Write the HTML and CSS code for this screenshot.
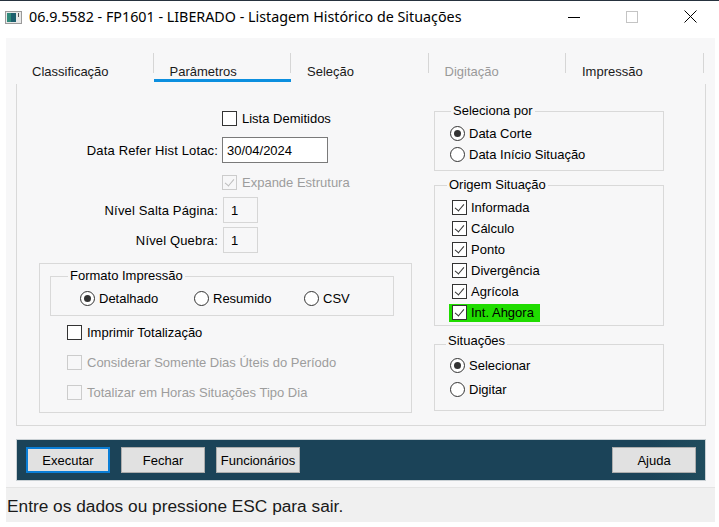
FILE: index.html
```html
<!DOCTYPE html>
<html lang="pt-BR">
<head>
    <meta charset="UTF-8">
    <title>Listagem Histórico de Situações</title>
    <link rel="stylesheet" href="styles.css">
</head>
<body>
    <div class="titlebar">
        <svg class="app-icon" width="17" height="13" viewBox="0 0 17 13">
            <rect x="0.5" y="0.5" width="16" height="12" fill="#e8e8e8" stroke="#9a9a9a"/>
            <rect x="2" y="2" width="9" height="9" fill="#1d5f6e"/>
            <rect x="2" y="2" width="4" height="9" fill="#2f8a7a"/>
            <rect x="13" y="2" width="1" height="4" fill="#555"/>
        </svg>
        <span class="title">06.9.5582 - FP1601 - LIBERADO - Listagem Histórico de Situações</span>
        <div class="win-btns">
            <span class="win-btn">
                <svg width="12" height="12" viewBox="0 0 12 12"><path d="M0 6.5h12" stroke="#000" stroke-width="1"/></svg>
            </span>
            <span class="win-btn">
                <svg width="12" height="12" viewBox="0 0 12 12"><rect x="0.5" y="0.5" width="11" height="11" fill="none" stroke="#c4c4c4"/></svg>
            </span>
            <span class="win-btn">
                <svg width="13" height="13" viewBox="0 0 13 13"><path d="M0.5 0.5l12 12M12.5 0.5l-12 12" stroke="#000" stroke-width="1"/></svg>
            </span>
        </div>
    </div>

    <div class="client">
        <div class="tabs">
            <div class="tab"><span class="tab-label">Classificação</span><span class="tab-sep"></span></div>
            <div class="tab active"><span class="tab-label">Parâmetros</span><span class="tab-sep"></span></div>
            <div class="tab"><span class="tab-label">Seleção</span><span class="tab-sep"></span></div>
            <div class="tab disabled"><span class="tab-label">Digitação</span><span class="tab-sep"></span></div>
            <div class="tab"><span class="tab-label">Impressão</span><span class="tab-sep"></span></div>
        </div>

        <div class="page">
            <div class="col-left">
                <div class="form-row">
                    <span class="row-label"></span>
                    <label class="check"><span class="box"></span>Lista Demitidos</label>
                </div>
                <div class="form-row row-input">
                    <span class="row-label">Data Refer Hist Lotac:</span>
                    <span class="edit edit-date">30/04/2024</span>
                </div>
                <div class="form-row row-expande">
                    <span class="row-label"></span>
                    <label class="check disabled"><span class="box checked"></span>Expande Estrutura</label>
                </div>
                <div class="form-row row-small">
                    <span class="row-label">Nível Salta Página:</span>
                    <span class="edit edit-small">1</span>
                </div>
                <div class="form-row row-small">
                    <span class="row-label">Nível Quebra:</span>
                    <span class="edit edit-small">1</span>
                </div>

                <div class="group">
                    <fieldset class="fs fs-formato">
                        <legend>Formato Impressão</legend>
                        <div class="fs-body radio-line">
                            <label class="radio"><span class="dot on"></span>Detalhado</label>
                            <label class="radio"><span class="dot"></span>Resumido</label>
                            <label class="radio"><span class="dot"></span>CSV</label>
                        </div>
                    </fieldset>
                    <div class="group-checks">
                        <label class="check"><span class="box"></span>Imprimir Totalização</label>
                        <label class="check disabled"><span class="box"></span>Considerar Somente Dias Úteis do Período</label>
                        <label class="check disabled"><span class="box"></span>Totalizar em Horas Situações Tipo Dia</label>
                    </div>
                </div>
            </div>

            <div class="col-right">
                <fieldset class="fs fs-seleciona">
                    <legend>Seleciona por</legend>
                    <div class="fs-body">
                        <label class="radio"><span class="dot on"></span>Data Corte</label>
                        <label class="radio"><span class="dot"></span>Data Início Situação</label>
                    </div>
                </fieldset>

                <fieldset class="fs fs-origem">
                    <legend>Origem Situação</legend>
                    <div class="fs-body">
                        <div class="opt-row"><label class="check"><span class="box checked"></span>Informada</label></div>
                        <div class="opt-row"><label class="check"><span class="box checked"></span>Cálculo</label></div>
                        <div class="opt-row"><label class="check"><span class="box checked"></span>Ponto</label></div>
                        <div class="opt-row"><label class="check"><span class="box checked"></span>Divergência</label></div>
                        <div class="opt-row"><label class="check"><span class="box checked"></span>Agrícola</label></div>
                        <div class="opt-row"><label class="check highlight"><span class="box checked"></span>Int. Ahgora</label></div>
                    </div>
                </fieldset>

                <fieldset class="fs fs-situacoes">
                    <legend>Situações</legend>
                    <div class="fs-body">
                        <label class="radio"><span class="dot on"></span>Selecionar</label>
                        <label class="radio"><span class="dot"></span>Digitar</label>
                    </div>
                </fieldset>
            </div>
        </div>

        <div class="button-bar">
            <button class="btn default">Executar</button>
            <button class="btn">Fechar</button>
            <button class="btn">Funcionários</button>
            <button class="btn btn-help">Ajuda</button>
        </div>

        <div class="status">Entre os dados ou pressione ESC para sair.</div>
    </div>
</body>
</html>
```

FILE: styles.css
```css
html,
body {
    margin: 0;
    padding: 0;
}

body {
    width: 719px;
    height: 527px;
    overflow: hidden;
    background: #ffffff;
    font-family: 'Liberation Sans', Arial, sans-serif;
    font-size: 13px;
    color: #000;
}

/* title bar */
.titlebar {
    height: 37px;
    border-top: 1px solid #26323e;
    display: flex;
    align-items: center;
    background: #fff;
}

.app-icon {
    margin-left: 5px;
    margin-top: -4px;
}

.title {
    margin-left: 7px;
    font-family: 'Noto Sans', sans-serif;
    font-size: 14.3px;
    line-height: 20px;
    margin-top: -6px;
    white-space: nowrap;
}

.win-btns {
    margin-left: auto;
    display: flex;
    align-self: stretch;
}

.win-btn {
    width: 58px;
    display: flex;
    align-items: center;
    justify-content: center;
}

.win-btn svg {
    margin-top: -6px;
}

/* client area */
.client {
    margin: 0 4px 0 6px;
    height: 484px;
    background: #f7f7f8;
    display: flex;
    flex-direction: column;
}

.tabs {
    display: flex;
    margin-left: 10px;
    height: 46px;
}

.tab {
    width: 137.5px;
    display: flex;
    align-items: flex-start;
    box-sizing: border-box;
}

.tab.active {
    border-bottom: 3px solid #0c8fdf;
    height: 44px;
}

.tab-label {
    flex: 1;
    padding: 26px 0 0 16px;
    line-height: 16px;
    color: #1a1a1a;
}

.tab.disabled .tab-label {
    color: #9a9a9a;
}

.tab-sep {
    width: 1px;
    height: 20px;
    margin-top: 15px;
    background: #d6d6d6;
}

/* tab page */
.page {
    margin: 0 9px 0 10px;
    height: 342px;
    box-sizing: border-box;
    border: 1px solid #d9d9d9;
    border-top: none;
    display: grid;
    grid-template-columns: 373px 230px;
    column-gap: 22px;
    padding-left: 22px;
    align-items: start;
}

.col-left {
    padding-top: 24px;
}

.form-row {
    display: grid;
    grid-template-columns: 179px auto;
    column-gap: 4px;
    align-items: center;
    height: 21px;
}

.row-label {
    text-align: right;
    white-space: nowrap;
    letter-spacing: 0.15px;
}

.row-input {
    height: 26px;
    margin-top: 8px;
}

.row-expande {
    margin-top: 9px;
}

.row-small {
    height: 26px;
    margin-top: 4px;
}

.edit {
    display: flex;
    align-items: center;
    box-sizing: border-box;
    height: 26px;
    padding-left: 4px;
}

.edit-date {
    width: 106px;
    background: #fff;
    border: 1px solid #7a7a7a;
}

.edit-small {
    width: 35px;
    margin-left: 1px;
    padding-left: 7px;
    border: 1px solid #d6d6d6;
}

/* checkboxes and radios */
.check,
.radio {
    display: flex;
    align-items: center;
    height: 21px;
    white-space: nowrap;
}

.check {
    gap: 5px;
}

.radio {
    gap: 4px;
}

.check.disabled {
    color: #9d9d9d;
}

.box {
    width: 15px;
    height: 15px;
    box-sizing: border-box;
    border: 1px solid #333;
    background: #fff;
    flex: none;
    position: relative;
}

.box.checked::after {
    content: '';
    position: absolute;
    left: 4px;
    top: 1px;
    width: 4px;
    height: 8px;
    border: solid #333;
    border-width: 0 1px 1px 0;
    transform: rotate(40deg);
}

.check.disabled .box {
    border-color: #cccccc;
    background: transparent;
}

.check.disabled .box.checked::after {
    border-color: #bdbdbd;
}

.dot {
    width: 15px;
    height: 15px;
    box-sizing: border-box;
    border: 1px solid #333;
    border-radius: 50%;
    background: #fff;
    flex: none;
    display: flex;
    align-items: center;
    justify-content: center;
}

.dot.on::after {
    content: '';
    width: 7px;
    height: 7px;
    border-radius: 50%;
    background: #333;
}

/* group boxes */
.group {
    margin-top: 10px;
    height: 150px;
    box-sizing: border-box;
    border: 1px solid #d9d9d9;
    padding-top: 4px;
}

.fs {
    margin: 0;
    padding: 0;
    border: 1px solid #d9d9d9;
    min-inline-size: 0;
    box-sizing: border-box;
}

.fs legend {
    padding: 0 2px;
    line-height: 16px;
}

.fs-formato {
    margin-left: 10px;
    width: 344px;
    padding: 4px 0 6px;
}

.fs-formato legend {
    margin-left: 17px;
}

.fs-formato .fs-body {
    padding-left: 29px;
}

.radio-line {
    display: grid;
    grid-template-columns: 114px 110px auto;
}

.group-checks {
    margin: 6px 0 0 27px;
    display: flex;
    flex-direction: column;
    gap: 9px;
}

.col-right {
    margin-top: 19px;
}

.fs-seleciona {
    padding: 4px 0 5px;
}

.fs-seleciona legend {
    margin-left: 16px;
}

.fs-seleciona .fs-body {
    padding-left: 15px;
}

.fs-origem {
    margin-top: 6px;
    padding: 4px 0 2px;
}

.fs-origem legend {
    margin-left: 12px;
}

.fs-origem .fs-body {
    padding-left: 14px;
}

.opt-row {
    height: 21px;
    display: flex;
    align-items: center;
}

.opt-row .check {
    height: 18px;
    padding: 0 6px 0 3px;
    gap: 4px;
}

.check.highlight {
    background: #20dc00;
}

.fs-situacoes {
    margin-top: 7px;
    padding: 0 0 10px;
}

.fs-situacoes legend {
    margin-left: 11px;
    padding-bottom: 6px;
}

.fs-situacoes .fs-body {
    padding-left: 15px;
}

.fs-situacoes .radio + .radio {
    margin-top: 3px;
}

/* bottom button bar */
.button-bar {
    margin: 13px 9px 0 10px;
    height: 42px;
    box-sizing: border-box;
    border: 1px solid #c9d0d4;
    background: linear-gradient(90deg, #1b4358 0%, #1b4358 92%, #1f4c5d 100%);
    display: flex;
    align-items: center;
    padding: 0 9px;
    gap: 11px;
}

.btn {
    width: 84px;
    height: 26px;
    margin: 0;
    padding: 0;
    font-family: 'Liberation Sans', Arial, sans-serif;
    font-size: 13px;
    color: #000;
    background: #e1e1e1;
    border: 1px solid #adadad;
}

.btn.default {
    border: 2px solid #0a7ed6;
}

.btn-help {
    margin-left: auto;
}

.status {
    margin-top: 6px;
    flex: 1;
    border-top: 1px solid #e4e4e4;
    background: #f0f0f0;
    font-size: 17.3px;
    line-height: 20px;
    padding: 8px 0 0 1px;
    color: #1a1a1a;
}
```
